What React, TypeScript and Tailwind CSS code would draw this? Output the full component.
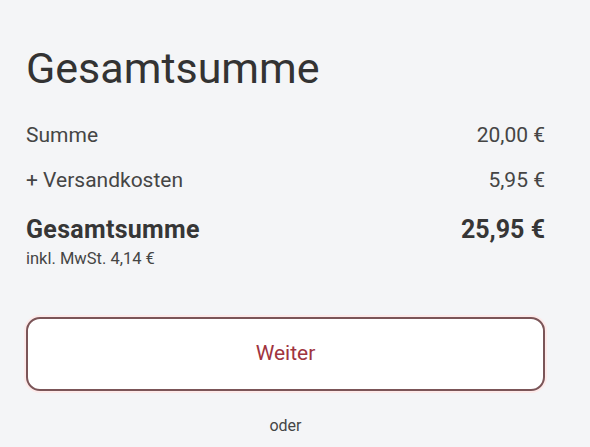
import React from 'react';

const App: React.FC = () => {
  return (
    <div className="min-h-[447px] w-[590px] bg-[#f4f5f7] font-['Roboto',sans-serif] text-[#333333]">
      <div className="w-[519px] ml-[26px] pt-[43px]">
        <h2 className="text-[43px] leading-[50px] font-normal text-[#333]">Gesamtsumme</h2>

        <div className="mt-[30px] flex justify-between text-[21px] leading-[24px] text-[#454545]">
          <span>Summe</span>
          <span>20,00 €</span>
        </div>
        <div className="mt-[21px] flex justify-between text-[21px] leading-[24px] text-[#454545]">
          <span>+ Versandkosten</span>
          <span>5,95 €</span>
        </div>

        <div className="mt-[23px] flex justify-between items-start">
          <div>
            <div className="text-[25px] leading-[30px] font-bold tracking-[0.3px] text-[#363636]">Gesamtsumme</div>
            <div className="mt-[4px] text-[16.5px] leading-[20px] text-[#454545]">inkl. MwSt. 4,14 €</div>
          </div>
          <div className="text-[25px] leading-[30px] font-bold text-[#363636]">25,95 €</div>
        </div>

        <button className="mt-[48px] w-full h-[74px] bg-white rounded-[14px] border-2 border-[#7b5558] text-[21px] text-[#a0343e] shadow-[0_0_0_2px_#fdeaea]">
          Weiter
        </button>

        <div className="mt-[25px] text-center text-[16px] leading-[20px] text-[#454545]">oder</div>
      </div>
    </div>
  );
};

export default App;
